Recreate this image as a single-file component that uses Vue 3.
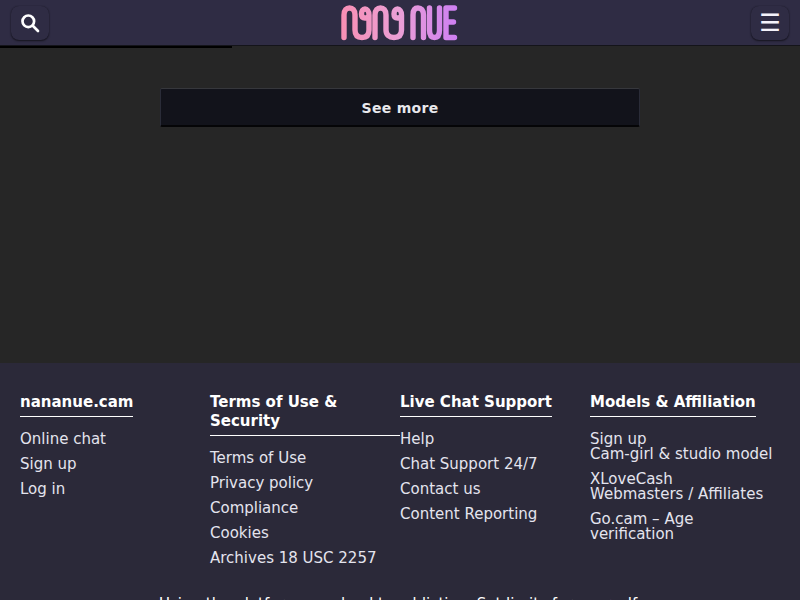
<script setup>
const cols = [
  { title: 'nananue.cam', links: ['Online chat', 'Sign up', 'Log in'] },
  { title: 'Terms of Use & Security', links: ['Terms of Use', 'Privacy policy', 'Compliance', 'Cookies', 'Archives 18 USC 2257'] },
  { title: 'Live Chat Support', links: ['Help', 'Chat Support 24/7', 'Contact us', 'Content Reporting'] },
  { title: 'Models & Affiliation', links: ['Sign up\nCam-girl & studio model', 'XLoveCash\nWebmasters / Affiliates', 'Go.cam – Age verification'] },
]
</script>

<template>
  <div class="page">
    <header class="top">
      <button class="ibtn" aria-label="Search">
        <svg width="20" height="20" viewBox="0 0 20 20" fill="none" stroke="#fff">
          <circle cx="8.300" cy="8.300" r="5.800" stroke-width="2.700" />
          <path d="M12.800 12.800 18 18" stroke-width="2.700" stroke-linecap="round" />
        </svg>
      </button>
      <svg class="logo" width="118" height="36" viewBox="342 5 118 36" fill="none" stroke-width="5.400" stroke-linecap="round" stroke-linejoin="round">
        <defs>
          <linearGradient id="lg" x1="342" x2="458" y1="0" y2="0" gradientUnits="userSpaceOnUse">
            <stop offset="0" stop-color="#f88fb4" />
            <stop offset=".5" stop-color="#eb9fd6" />
            <stop offset="1" stop-color="#cd7ff2" />
          </linearGradient>
        </defs>
        <g stroke="url(#lg)">
          <path d="M345 37.500V15C345 10 347.500 8 350.500 8S356 10 356 15V30C356 35 358.500 37.500 363 37.500S370 35 370 30V15C370 11 368 9 366 9S362.500 11 362.500 14 364 18 366 18 370 17 370 15" />
          <path d="M376 37.500V15C376 10 378.500 8 381.500 8S387 10 387 15V30C387 35 390 37.500 395 37.500S402.500 35 402.500 30V15C402.500 11 400.500 9 398.500 9S395 11 395 14 396.500 18 398.500 18 402.500 17 402.500 15" />
          <path d="M414 37.500V15C414 10 416 8 419 8S424.500 10 424.500 15V37.500" />
          <path d="M430.500 8V30C430.500 35 432.500 37.500 435.500 37.500S440.500 35 440.500 30V8" />
          <path d="M455.500 8H447V37.500H455.500M447 22H454.500" />
        </g>
      </svg>
      <button class="ibtn burger" aria-label="Menu">☰</button>
    </header>
    <div class="strip"></div>
    <main class="main">
      <button class="more">See more</button>
    </main>
    <footer class="foot">
      <div class="grid">
        <section v-for="c in cols" :key="c.title">
          <h4><span>{{ c.title }}</span></h4>
          <a v-for="l in c.links" :key="l">{{ l }}</a>
        </section>
      </div>
      <p class="warn">Using the platform may lead to addiction. Set limits for yourself.</p>
    </footer>
  </div>
</template>

<style>
html, body { margin: 0; background: #262626; overflow: hidden; }
</style>

<style scoped>
.page { height: 600px; overflow: hidden; font-family: "DejaVu Sans", sans-serif; font-size: 15px; color: #e8e8f0; display: flex; flex-direction: column; }
.top { height: 46px; flex: none; box-sizing: border-box; border-bottom: 1px solid #14141a; background: #2f2c44; display: flex; align-items: center; justify-content: space-between; padding: 0 11px; }
.ibtn { width: 38px; height: 34px; padding: 0; border: 0; border-radius: 8px; background: #2f2c44; box-shadow: 0 1px 2px rgba(0,0,0,.55), 0 0 1px rgba(0,0,0,.4); display: flex; align-items: center; justify-content: center; }
.logo { display: block; }
.burger { color: #f4f2fa; font: 24px/34px "DejaVu Sans", sans-serif; }
.strip { height: 2px; flex: none; width: 232px; background: #000; }
.main { height: 315px; flex: none; box-sizing: border-box; padding-top: 40px; display: flex; justify-content: center; align-items: flex-start; }
.more { width: 480px; height: 39px; padding: 1px 0 0; border: 0; border-top: 1px solid #36373c; border-bottom: 2px solid #050507; border-left: 1px solid #2a2c38; border-right: 1px solid #2a2c38; border-radius: 2px; background: #12131b; color: #e8e8ec; font: 700 14px "DejaVu Sans", sans-serif; letter-spacing: .3px; }
.foot { flex: 1; background: #2b2939; padding: 30px 20px 0; }
.grid { display: grid; grid-template-columns: repeat(4, 190px); align-items: start; }
h4 { margin: 0 0 10px; font-size: 15px; line-height: 19px; font-weight: 700; color: #fff; }
h4 span { display: inline-block; padding-bottom: 4px; border-bottom: 1px solid #fff; }
a { display: block; padding: 5px 0; line-height: 15px; font-size: 15px; color: #e4e4ee; white-space: pre-line; }
.warn { margin: 25px 0 0; text-align: center; color: #fff; font-size: 15px; line-height: 16px; }
</style>
